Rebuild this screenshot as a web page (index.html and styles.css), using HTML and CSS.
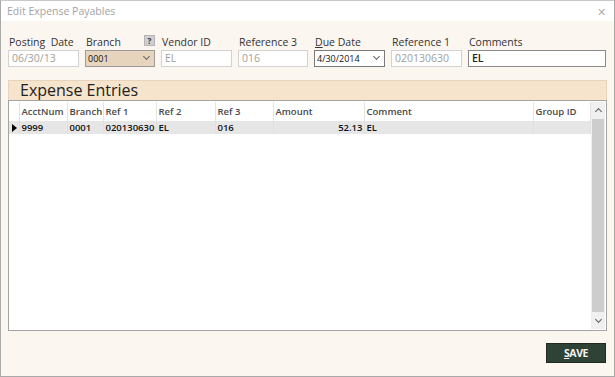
FILE: index.html
```html
<!DOCTYPE html>
<html lang="en">
<head>
    <meta charset="UTF-8">
    <title>Edit Expense Payables</title>
    <link rel="stylesheet" href="styles.css">
</head>
<body>
    <div class="window">
        <div class="titlebar">
            <span class="title">Edit Expense Payables</span>
            <span class="close">&#x2715;</span>
        </div>
        <div class="content">
            <div class="fields">
                <div class="field w71">
                    <label>Posting&nbsp; Date</label>
                    <div class="input disabled">06/30/13</div>
                </div>
                <div class="field w70">
                    <label>Branch <span class="help">?</span></label>
                    <div class="input combo branch">0001<span class="caret"></span></div>
                </div>
                <div class="field w71">
                    <label>Vendor ID</label>
                    <div class="input disabled">EL</div>
                </div>
                <div class="field w70">
                    <label>Reference 3</label>
                    <div class="input disabled">016</div>
                </div>
                <div class="field w71">
                    <label><u>D</u>ue Date</label>
                    <div class="input combo dark">4/30/2014<span class="caret"></span></div>
                </div>
                <div class="field w71">
                    <label>Reference 1</label>
                    <div class="input disabled">020130630</div>
                </div>
                <div class="field w138">
                    <label>Comments</label>
                    <div class="input active">EL</div>
                </div>
            </div>

            <div class="section-head">Expense Entries</div>
            <div class="grid">
                <div class="grid-body">
                    <table>
                        <colgroup>
                            <col style="width:10px">
                            <col style="width:48px">
                            <col style="width:36px">
                            <col style="width:53px">
                            <col style="width:59px">
                            <col style="width:58px">
                            <col style="width:91px">
                            <col style="width:169px">
                            <col style="width:57px">
                        </colgroup>
                        <thead>
                            <tr>
                                <th></th>
                                <th>AcctNum</th>
                                <th>Branch</th>
                                <th>Ref 1</th>
                                <th>Ref 2</th>
                                <th>Ref 3</th>
                                <th>Amount</th>
                                <th>Comment</th>
                                <th>Group ID</th>
                            </tr>
                        </thead>
                        <tbody>
                            <tr class="current">
                                <td class="marker"><span class="arrow"></span></td>
                                <td>9999</td>
                                <td>0001</td>
                                <td>020130630</td>
                                <td>EL</td>
                                <td>016</td>
                                <td class="num">52.13</td>
                                <td>EL</td>
                                <td></td>
                            </tr>
                        </tbody>
                    </table>
                </div>
                <div class="scrollbar">
                    <span class="sb-arrow up"></span>
                    <div class="thumb"></div>
                    <span class="sb-arrow down"></span>
                </div>
            </div>

            <div class="actions">
                <button class="save-btn"><u>S</u>AVE</button>
            </div>
        </div>
    </div>
</body>
</html>
```

FILE: styles.css
```css
* {
    margin: 0;
    padding: 0;
    box-sizing: border-box;
}

body {
    font-family: "Open Sans", "Noto Sans", sans-serif;
    background: #ffffff;
    width: 615px;
    height: 377px;
    overflow: hidden;
}

.window {
    width: 615px;
    height: 377px;
    border: 1px solid #a9a9a9;
    border-top-color: #c8c8c8;
    display: flex;
    flex-direction: column;
}

.titlebar {
    height: 20px;
    background: #ffffff;
    display: flex;
    align-items: center;
    justify-content: space-between;
    padding: 0 6px 0 6px;
}

.title {
    font-size: 10.5px;
    color: #a3a3a3;
}

.close {
    font-size: 11px;
    color: #b0b0b0;
    margin-right: 2px;
}

.content {
    flex: 1;
    background: #fcf6f0;
    padding: 14px 7px 0 7px;
    display: flex;
    flex-direction: column;
}

.fields {
    display: flex;
    gap: 6px;
}

.field {
    display: flex;
    flex-direction: column;
}

.w70 { width: 70px; }
.w71 { width: 71px; }
.w138 { width: 138px; }

.field label {
    font-size: 10.5px;
    color: #333333;
    height: 15px;
    line-height: 15px;
    margin-left: 1px;
    position: relative;
    white-space: nowrap;
}

.help {
    position: absolute;
    right: 0;
    top: 0;
    width: 11px;
    height: 11px;
    background: #cfcfcf;
    border: 1px solid #b5b5b5;
    font-size: 8px;
    font-weight: bold;
    line-height: 9px;
    text-align: center;
    color: #333333;
}

.input {
    height: 17px;
    border: 1px solid #d2d2d2;
    background: #ffffff;
    font-size: 10.5px;
    line-height: 15px;
    padding-left: 3px;
    color: #333333;
    position: relative;
    white-space: nowrap;
}

.input.disabled {
    color: #a0a0a0;
}

.input.active {
    border-color: #8a8a8a;
    font-weight: 600;
    color: #222222;
}

.input.combo {
    font-size: 9px;
    padding-left: 2px;
    color: #111111;
}

.input.branch {
    background: #e7d4bd;
    border-color: #9a9a9a;
}

.input.dark {
    border-color: #7a7a7a;
}

.caret {
    position: absolute;
    right: 5px;
    top: 3px;
    width: 5px;
    height: 5px;
    border-right: 1px solid #666666;
    border-bottom: 1px solid #666666;
    transform: rotate(45deg);
}

.section-head {
    margin-top: 13px;
    height: 20px;
    background: #f6e4cd;
    border: 1px solid #e8d4bc;
    border-bottom: none;
    font-size: 16px;
    line-height: 19px;
    padding-left: 11px;
    color: #222222;
}

.grid {
    height: 231px;
    border: 1px solid #a4a4a4;
    background: #ffffff;
    display: flex;
    padding: 1px 1px 1px 0;
}

.grid-body {
    flex: 1;
}

table {
    border-collapse: collapse;
    table-layout: fixed;
    width: 581px;
    font-size: 9.5px;
}

th {
    text-align: left;
    font-weight: 600;
    color: #4a4a4a;
    height: 19px;
    padding: 0 2px;
    border-right: 1px solid #e4e4e4;
    white-space: nowrap;
    overflow: hidden;
}

td {
    height: 13px;
    padding: 0 1px 0 2px;
    color: #111111;
    font-weight: 600;
    white-space: nowrap;
    overflow: hidden;
    border-right: 1px solid #e0e0e0;
}

tr.current td {
    background: #e6e6e6;
}

td.num {
    text-align: right;
}

.arrow {
    display: block;
    width: 0;
    height: 0;
    margin-left: 1px;
    border-top: 4px solid transparent;
    border-bottom: 4px solid transparent;
    border-left: 5px solid #000000;
}

.scrollbar {
    width: 14px;
    background: #f0f0f0;
    display: flex;
    flex-direction: column;
    align-items: stretch;
}

.sb-arrow {
    height: 17px;
    position: relative;
}

.sb-arrow::after {
    content: "";
    position: absolute;
    left: 5px;
    width: 4px;
    height: 4px;
    border-left: 1px solid #606060;
    border-top: 1px solid #606060;
}

.sb-arrow.up::after {
    top: 7px;
    transform: rotate(45deg);
}

.sb-arrow.down::after {
    top: 5px;
    transform: rotate(225deg);
}

.thumb {
    flex: 1;
    background: #cdcdcd;
    margin: 0 1px;
}

.actions {
    display: flex;
    justify-content: flex-end;
    padding-top: 12px;
    padding-right: 1px;
}

.save-btn {
    width: 60px;
    height: 20px;
    background: #2e4236;
    border: 1px solid #1e2a22;
    color: #f2f2f2;
    font-family: "Open Sans", sans-serif;
    font-size: 10.5px;
    font-weight: bold;
    letter-spacing: -0.4px;
}
```
